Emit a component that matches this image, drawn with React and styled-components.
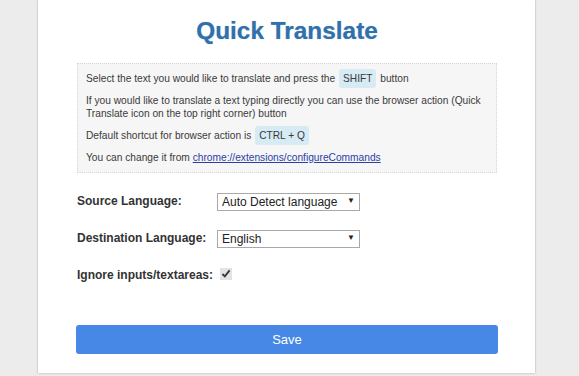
import React, { useState } from "react";
import styled, { createGlobalStyle } from "styled-components";

const GlobalStyle = createGlobalStyle`
  html, body {
    margin: 0;
    padding: 0;
    background: #ececec;
    font-family: "Liberation Sans", Arial, sans-serif;
    color: #333;
  }
`;

const Page = styled.div`
  height: 376px;
  overflow: hidden;
`;

const Card = styled.div`
  margin-left: 38px;
  width: 497px;
  height: 373px;
  background: #fff;
  box-shadow: 0 0 2px rgba(0, 0, 0, 0.3);
  padding: 17px 38px 0 39px;
  box-sizing: border-box;
  display: flex;
  flex-direction: column;
`;

const Title = styled.h1`
  margin: 0;
  font-size: 24.4px;
  line-height: 28px;
  font-weight: bold;
  text-align: center;
  color: #3170aa;
  text-shadow: 0 0 1px rgba(49, 112, 170, 0.5);
`;

const InfoBox = styled.div`
  margin-top: 18px;
  background: #f6f6f6;
  border: 1px dotted #d6d6d6;
  padding: 8px 8px 8px 8px;
  font-size: 10.2px;
  line-height: 13px;
  color: #3a3a3a;
`;

const Para = styled.p`
  margin: 0 0 9px;
  &:last-child {
    margin-bottom: 0;
  }
`;

const Key = styled.span`
  display: inline-block;
  background: #d7ebf5;
  border-radius: 3px;
  padding: 3px 4px;
  margin: -3px 1px;
  line-height: 13px;
`;

const Link = styled.a`
  color: #2b3fa6;
  text-decoration: underline;
`;

const Form = styled.div`
  margin-top: 19px;
  display: grid;
  grid-template-columns: 140px 1fr;
  row-gap: 19px;
  align-items: center;
`;

const Label = styled.label`
  font-size: 12px;
  font-weight: bold;
  color: #333;
  line-height: 18px;
`;

const SelectWrap = styled.div`
  position: relative;
  width: 143px;
  height: 18px;
`;

const Select = styled.select`
  appearance: none;
  width: 100%;
  height: 18px;
  margin: 0;
  padding: 0 14px 0 4px;
  border: 1px solid #a9a9a9;
  border-radius: 0;
  background: #fff;
  font-family: "Liberation Sans", Arial, sans-serif;
  font-size: 12px;
  color: #222;
  box-sizing: border-box;
  outline: none;
`;

const Arrow = styled.span`
  position: absolute;
  right: 5px;
  top: 3px;
  font-size: 8px;
  line-height: 12px;
  color: #222;
  pointer-events: none;
`;

const Check = styled.input`
  margin: 0 0 0 3px;
  width: 12px;
  height: 12px;
  accent-color: #e4e4e4;
`;

const SaveButton = styled.button`
  margin-top: 41px;
  width: 422px;
  margin-left: -1px;
  height: 29px;
  border: none;
  border-radius: 3px;
  background: #4787e6;
  color: #fff;
  font-family: "Liberation Sans", Arial, sans-serif;
  font-size: 13px;
  font-weight: normal;
  cursor: pointer;
`;

function LangSelect({ value, options }) {
  const [val, setVal] = useState(value);
  return (
    <SelectWrap>
      <Select value={val} onChange={(e) => setVal(e.target.value)}>
        {options.map((o) => (
          <option key={o}>{o}</option>
        ))}
      </Select>
      <Arrow>▼</Arrow>
    </SelectWrap>
  );
}

export default function App() {
  const [ignore, setIgnore] = useState(true);

  return (
    <Page>
      <GlobalStyle />
      <Card>
        <Title>Quick Translate</Title>
        <InfoBox>
          <Para>
            Select the text you would like to translate and press the{" "}
            <Key>SHIFT</Key> button
          </Para>
          <Para>
            If you would like to translate a text typing directly you can use
            the browser action (Quick Translate icon on the top right corner)
            button
          </Para>
          <Para>
            Default shortcut for browser action is <Key>CTRL + Q</Key>
          </Para>
          <Para>
            You can change it from{" "}
            <Link href="#">chrome://extensions/configureCommands</Link>
          </Para>
        </InfoBox>
        <Form>
          <Label>Source Language:</Label>
          <LangSelect
            value="Auto Detect language"
            options={["Auto Detect language", "English", "French", "German"]}
          />
          <Label>Destination Language:</Label>
          <LangSelect
            value="English"
            options={["English", "French", "German", "Spanish"]}
          />
          <Label>Ignore inputs/textareas:</Label>
          <div>
            <Check
              type="checkbox"
              checked={ignore}
              onChange={(e) => setIgnore(e.target.checked)}
            />
          </div>
        </Form>
        <SaveButton>Save</SaveButton>
      </Card>
    </Page>
  );
}
